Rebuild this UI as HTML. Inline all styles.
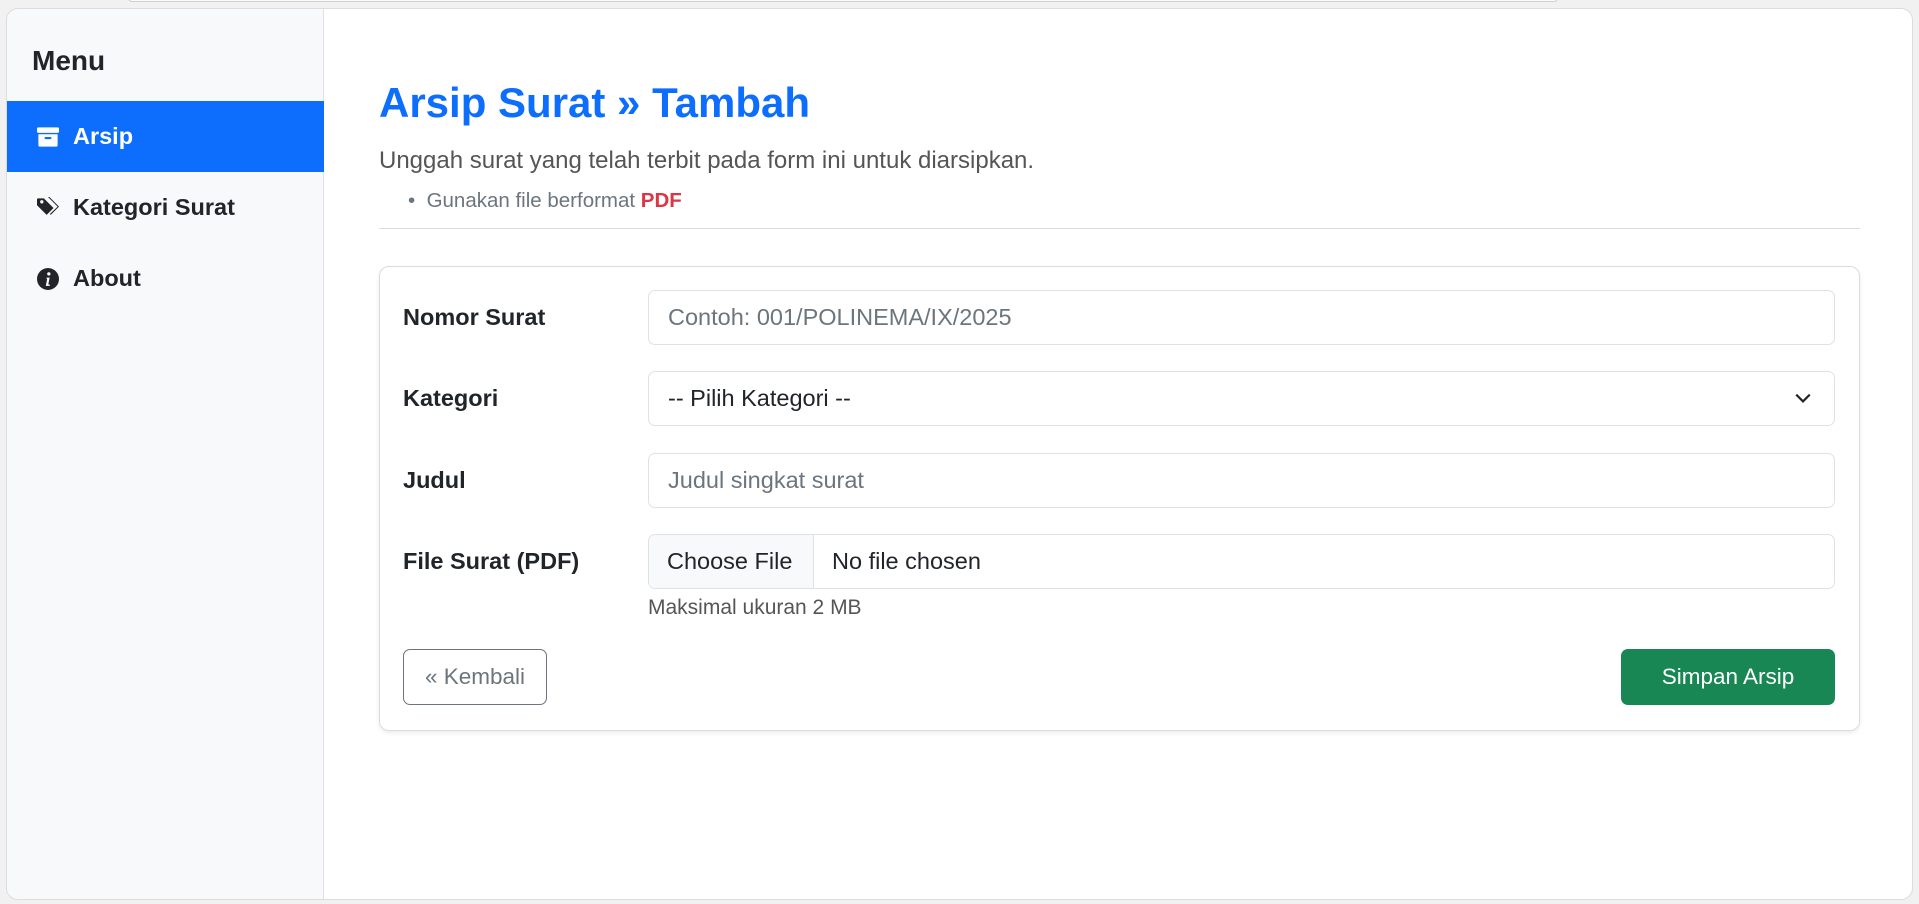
<!DOCTYPE html>
<html><head><meta charset="utf-8"><style>
*{box-sizing:border-box;margin:0;padding:0}
body{width:1919px;height:904px;background:#f1f1f1;font-family:"Liberation Sans",Arial,sans-serif;position:relative;overflow:hidden;color:#212529}
.a{position:absolute}
.frame{left:6px;top:8px;width:1907px;height:892px;background:#fff;border:1px solid #dcdcdc;border-radius:12px;overflow:hidden}
.side{left:0;top:0;width:317px;height:100%;background:#f8f9fa;border-right:1px solid #dee2e6}
.item{left:0;width:317px;height:71px;display:flex;align-items:center;padding-left:30px;font-weight:bold;font-size:23.5px;color:#212529}
.item svg{margin-right:14px}
.lbl{left:403px;font-weight:bold;font-size:23.5px;height:55px;line-height:55px}
.inp{left:648px;width:1187px;height:55px;border:1px solid #dee2e6;border-radius:7px;font-size:23.5px;line-height:53px;padding-left:19px;color:#6c757d;background:#fff}
</style></head><body>
<div class="a" style="left:128px;top:-6px;width:1430px;height:8px;border:1px solid #d0d0d0;border-radius:6px;background:#fafafa"></div>
<div class="a frame">
 <div class="a side">
  <div class="a" style="left:25px;top:36px;font-size:28px;font-weight:bold">Menu</div>
  <div class="a item" style="top:92px;background:#0d6efd;color:#fff">
   <svg width="22" height="22" viewBox="0 0 16 16"><rect x="0" y="1" width="16" height="4" rx="1" fill="#fff"/><path d="M1 6h14v8a1 1 0 0 1-1 1H2a1 1 0 0 1-1-1z" fill="#fff"/><rect x="5.5" y="8" width="5" height="1.5" rx=".7" fill="#0d6efd"/></svg>Arsip</div>
  <div class="a item" style="top:163px">
   <svg width="22" height="22" viewBox="0 0 16 16"><path d="M0 1.5V6l7 7 5-5-7-7H1.5A1.5 1.5 0 0 0 0 1.5z" fill="#212529"/><circle cx="3.5" cy="3.5" r="1.2" fill="#f8f9fa"/><path d="M8 0h1l7 7-6 6-.6-.6L15 7z" fill="#212529"/></svg>Kategori Surat</div>
  <div class="a item" style="top:234px">
   <svg width="22" height="22" viewBox="0 0 16 16"><circle cx="8" cy="8" r="8" fill="#212529"/><circle cx="8.6" cy="4.3" r="1.2" fill="#fff"/><path d="M7 7h2.2l-1 5H9.3v1H6.4l1-5H7z" fill="#fff"/></svg>About</div>
 </div>
 <div class="a" style="left:372px;top:70px;font-size:42px;font-weight:bold;color:#0d6efd">Arsip Surat » Tambah</div>
 <div class="a" style="left:372px;top:138px;font-size:24px;color:#555">Unggah surat yang telah terbit pada form ini untuk diarsipkan.</div>
 <div class="a" style="left:401px;top:180px;font-size:20.5px;color:#6c757d">•&nbsp;&nbsp;Gunakan file berformat <b style="color:#dc3545">PDF</b></div>
 <div class="a" style="left:372px;top:219px;width:1481px;height:1px;background:#dcdcdc"></div>
 <div class="a" style="left:372px;top:257px;width:1481px;height:465px;border:1px solid #dcdcdc;border-radius:10px;box-shadow:0 2px 5px rgba(0,0,0,.08)"></div>
</div>
<div class="a lbl" style="top:290px">Nomor Surat</div>
<div class="a inp" style="top:290px">Contoh: 001/POLINEMA/IX/2025</div>
<div class="a lbl" style="top:371px">Kategori</div>
<div class="a inp" style="top:371px;color:#212529">-- Pilih Kategori --
 <svg class="a" style="right:22px;top:19px" width="18" height="14" viewBox="0 0 16 12"><path d="M2 3l6 6 6-6" stroke="#212529" stroke-width="2" fill="none"/></svg></div>
<div class="a lbl" style="top:453px">Judul</div>
<div class="a inp" style="top:453px">Judul singkat surat</div>
<div class="a lbl" style="top:534px">File Surat (PDF)</div>
<div class="a inp" style="top:534px;padding-left:0;color:#212529;overflow:hidden"><span style="display:inline-block;width:165px;height:53px;background:#f8f9fa;border-right:1px solid #dee2e6;padding-left:18px">Choose File</span><span style="padding-left:18px">No file chosen</span></div>
<div class="a" style="left:648px;top:596px;font-size:21px;color:#555">Maksimal ukuran 2 MB</div>
<div class="a" style="left:403px;top:649px;width:144px;height:56px;border:1px solid #6c757d;border-radius:7px;font-size:22.5px;line-height:54px;text-align:center;color:#6c757d">« Kembali</div>
<div class="a" style="left:1621px;top:649px;width:214px;height:56px;background:#198754;border-radius:7px;font-size:22.5px;line-height:56px;text-align:center;color:#fff">Simpan Arsip</div>
</body></html>
